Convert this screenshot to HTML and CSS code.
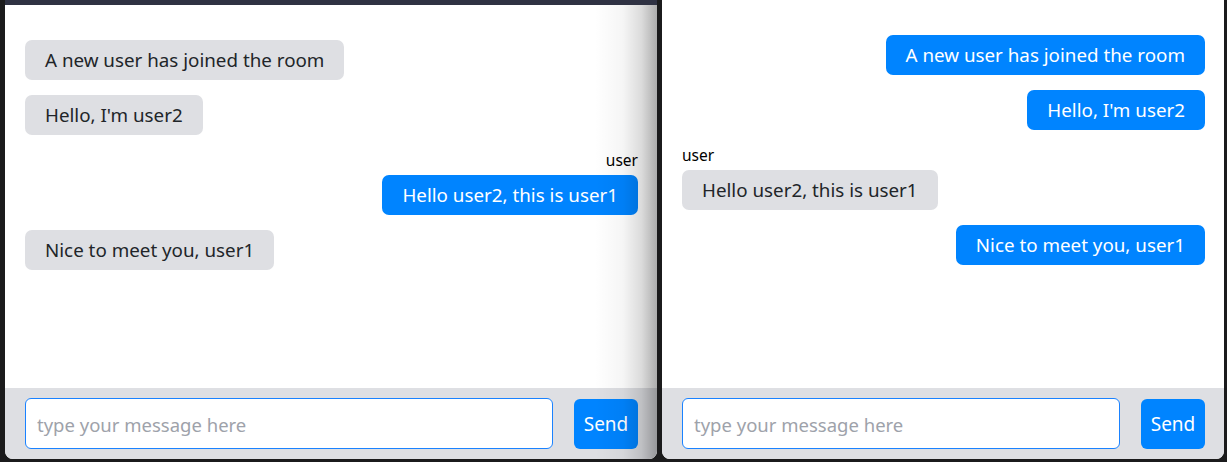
FILE: index.html
```html
<!DOCTYPE html>
<html lang="en">
<head>
<meta charset="utf-8">
<title>Chat</title>
<link rel="stylesheet" href="styles.css">
</head>
<body class="desktop">
  <section class="window window-left">
    <div class="titlebar"></div>
    <div class="chat">
      <div class="messages">
        <div class="msg in"><div class="bubble">A new user has joined the room</div></div>
        <div class="msg in"><div class="bubble">Hello, I'm user2</div></div>
        <div class="msg out"><div class="sender">user</div><div class="bubble">Hello user2, this is user1</div></div>
        <div class="msg in"><div class="bubble">Nice to meet you, user1</div></div>
      </div>
      <form class="composer">
        <input class="field" type="text" placeholder="type your message here">
        <button class="send" type="button">Send</button>
      </form>
      <div class="shade"></div>
    </div>
  </section>
  <section class="window window-right">
    <div class="chat">
      <div class="messages">
        <div class="msg out"><div class="bubble">A new user has joined the room</div></div>
        <div class="msg out"><div class="bubble">Hello, I'm user2</div></div>
        <div class="msg in"><div class="sender">user</div><div class="bubble">Hello user2, this is user1</div></div>
        <div class="msg out"><div class="bubble">Nice to meet you, user1</div></div>
      </div>
      <form class="composer">
        <input class="field" type="text" placeholder="type your message here">
        <button class="send" type="button">Send</button>
      </form>
    </div>
  </section>
</body>
</html>
```
FILE: styles.css
```css
* { box-sizing: border-box; }
html, body { margin: 0; padding: 0; }
.desktop {
  width: 1227px;
  height: 462px;
  background: #1b1b1c;
  display: flex;
  align-items: flex-start;
  font-family: "Noto Sans", "Open Sans", sans-serif;
  overflow: hidden;
}
.window {
  display: flex;
  flex-direction: column;
  height: 459px;
}
.window-left {
  width: 652px;
  margin-left: 5px;
}
.window-right {
  width: 562px;
  margin-left: 5px;
}
.titlebar {
  height: 5px;
  background: #2f3243;
  flex: none;
}
.chat {
  position: relative;
  flex: 1;
  display: flex;
  flex-direction: column;
  background: #ffffff;
  border-radius: 0 0 8px 8px;
  overflow: hidden;
}
.messages {
  flex: 1;
  display: flex;
  flex-direction: column;
  gap: 15px;
  padding: 35px 19px 0 20px;
}
.msg {
  display: flex;
  flex-direction: column;
  gap: 5px;
}
.msg.in { align-items: flex-start; }
.msg.out { align-items: flex-end; }
.sender {
  font-size: 15.5px;
  line-height: 18px;
  margin-top: 1px;
  margin-bottom: 1px;
  color: #000;
}
.bubble {
  font-size: 18.8px;
  line-height: 24px;
  padding: 8px 20px;
  border-radius: 7px;
}
.msg.in .bubble {
  background: #dedfe3;
  color: #212529;
}
.msg.out .bubble {
  background: #0084ff;
  color: #ffffff;
}
.composer {
  flex: none;
  height: 71px;
  margin: 0;
  display: flex;
  align-items: center;
  gap: 21px;
  padding: 10px 19px 10px 20px;
  background: #dedfe3;
}
.field {
  flex: 1;
  height: 51px;
  border: 1px solid #1a82ff;
  border-radius: 6px;
  padding: 2px 11px 0;
  font-family: inherit;
  font-size: 18.5px;
  color: #212529;
  background: #fff;
  outline: none;
}
.field::placeholder { color: #9ea2aa; }
.send {
  flex: none;
  width: 64px;
  height: 50px;
  border: none;
  border-radius: 6px;
  background: #0084ff;
  color: #fff;
  font-family: inherit;
  font-size: 19px;
  padding: 0;
}
.shade {
  position: absolute;
  top: 0;
  right: 0;
  bottom: 0;
  width: 62px;
  background: linear-gradient(to right, rgba(0,0,0,0) 0%, rgba(0,0,0,0.04) 45%, rgba(0,0,0,0.14) 75%, rgba(0,0,0,0.32) 100%);
  pointer-events: none;
}
```
